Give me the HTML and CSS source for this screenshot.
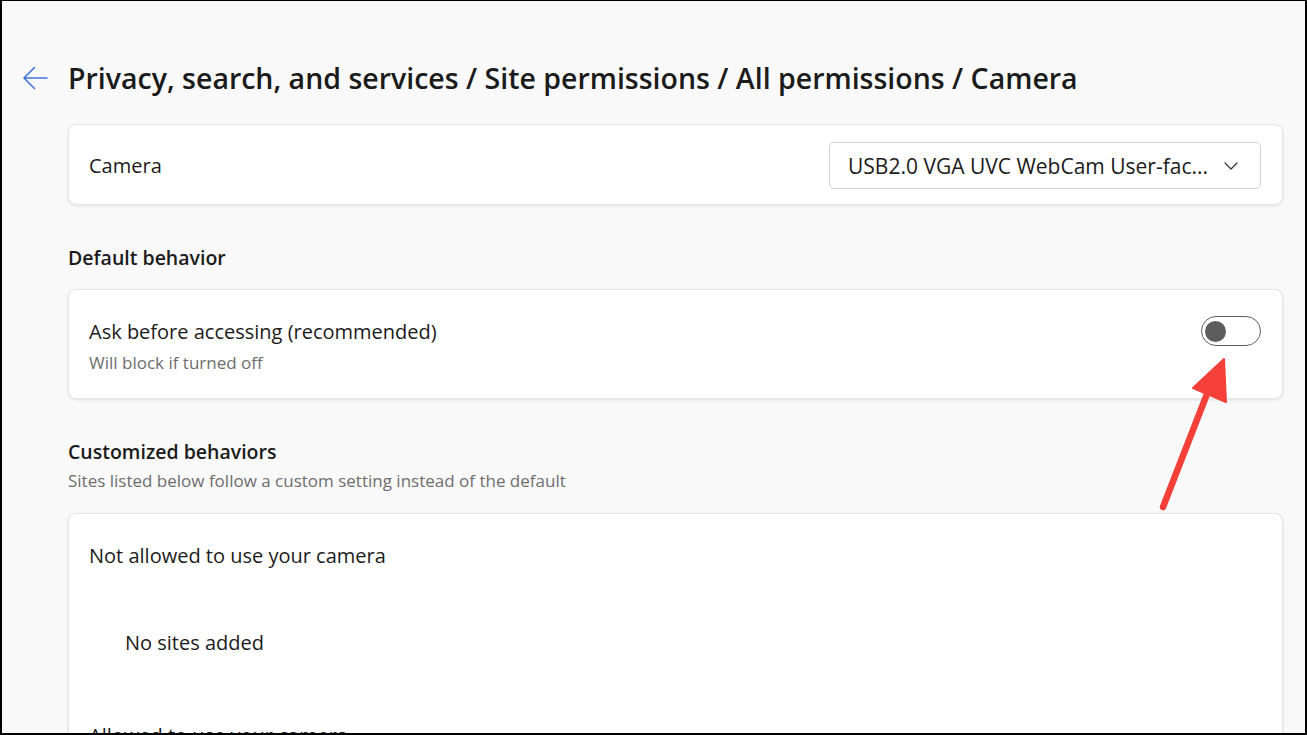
FILE: index.html
```html
<!DOCTYPE html>
<html lang="en">
<head>
<meta charset="utf-8">
<title>Camera</title>
<link rel="stylesheet" href="styles.css">
</head>
<body>
<div class="frame">
  <div class="page">
    <header class="header">
      <svg class="back" width="26" height="24" viewBox="0 0 26 24" aria-hidden="true">
        <path d="M25 12H2.5M12.5 1.5L2 12l10.5 10.5" fill="none" stroke="#3f74dc" stroke-width="1.6" stroke-linecap="round" stroke-linejoin="round"/>
      </svg>
      <h1 class="title">Privacy, search, and services / Site permissions / All permissions / Camera</h1>
    </header>

    <section class="card card-camera">
      <span class="label">Camera</span>
      <div class="select">
        <span class="select-text">USB2.0 VGA UVC WebCam User-fac...</span>
        <svg class="chev" width="14" height="8" viewBox="0 0 14 8" aria-hidden="true">
          <path d="M1 1l6 6 6-6" fill="none" stroke="#333" stroke-width="1.2" stroke-linecap="round" stroke-linejoin="round"/>
        </svg>
      </div>
    </section>

    <h2 class="section-title first">Default behavior</h2>
    <section class="card card-default">
      <div class="texts">
        <div class="label">Ask before accessing (recommended)</div>
        <div class="sub">Will block if turned off</div>
      </div>
      <div class="toggle"><span class="knob"></span></div>
    </section>

    <h2 class="section-title second">Customized behaviors</h2>
    <div class="section-sub">Sites listed below follow a custom setting instead of the default</div>
    <section class="card card-list">
      <div class="label">Not allowed to use your camera</div>
      <div class="empty">No sites added</div>
      <div class="label allowed">Allowed to use your camera</div>
    </section>
  </div>

  <svg class="annot" width="120" height="180" viewBox="0 0 120 180" aria-hidden="true">
    <line x1="13" y1="175" x2="57" y2="62" stroke="#f5403a" stroke-width="6.5" stroke-linecap="round"/>
    <polygon points="74,27 43,56 76,70" fill="#f5403a" stroke="#f5403a" stroke-width="2" stroke-linejoin="round"/>
  </svg>
</div>
</body>
</html>
```

FILE: styles.css
```css
* { box-sizing: border-box; }
html, body { margin: 0; padding: 0; }
body {
  width: 1307px;
  height: 735px;
  overflow: hidden;
  background: #000;
  font-family: "Open Sans", "Noto Sans", "Liberation Sans", sans-serif;
  color: #1b1b1b;
}
.frame {
  position: relative;
  width: 1307px;
  height: 735px;
  border-style: solid;
  border-color: #000;
  border-width: 1px 2px 2px 2px;
  background: #f9f9f9;
  overflow: hidden;
}
.page {
  padding: 0 22px 0 66px;
}
.header {
  display: flex;
  align-items: center;
  height: 40px;
  margin-top: 57px;
  margin-left: -46px;
}
.back { margin-right: 20px; flex: none; }
.title {
  margin: 0;
  font-size: 28.5px;
  font-weight: 600;
  line-height: 40px;
  color: #1b1b1b;
  white-space: nowrap;
}
.card {
  background: #fff;
  border: 1px solid #e6e6e6;
  border-radius: 8px;
  box-shadow: 0 1px 3px rgba(0,0,0,0.10);
}
.card-camera {
  margin-top: 26px;
  height: 81px;
  display: flex;
  align-items: center;
  justify-content: space-between;
  padding: 2px 21px 0 20px;
}
.label {
  font-size: 20px;
  line-height: 26px;
  color: #1b1b1b;
}
.select {
  width: 432px;
  height: 47px;
  border: 1px solid #d1d1d1;
  border-radius: 5px;
  display: flex;
  align-items: center;
  justify-content: space-between;
  padding: 0 22px 0 18px;
}
.select-text {
  font-size: 21px;
  font-weight: 500;
  color: #1b1b1b;
  white-space: nowrap;
}
.section-title {
  margin: 0;
  font-size: 19.5px;
  font-weight: 600;
  line-height: 28px;
  color: #1b1b1b;
}
.section-title.first { margin-top: 39px; }
.section-title.second { margin-top: 39px; }
.section-sub {
  margin-top: 4px;
  font-size: 17px;
  line-height: 22px;
  color: #6e6e6e;
}
.card-default {
  margin-top: 17px;
  height: 110px;
  display: flex;
  align-items: flex-start;
  justify-content: space-between;
  padding: 29px 21px 0 20px;
}
.sub {
  font-size: 17px;
  line-height: 22px;
  color: #6e6e6e;
  margin-top: 7px;
}
.toggle {
  width: 60px;
  height: 30px;
  margin-top: -3px;
  border: 1px solid #5f5f5f;
  border-radius: 15px;
  padding: 0 0 0 3px;
  display: flex;
  align-items: center;
}
.knob {
  width: 21px;
  height: 21px;
  border-radius: 50%;
  background: #5d5d5d;
}
.card-list {
  margin-top: 21px;
  height: 400px;
  padding: 29px 20px 0 20px;
}
.empty {
  margin-top: 61px;
  margin-left: 36px;
  font-size: 20px;
  line-height: 26px;
  color: #1b1b1b;
}
.allowed { margin-top: 67px; }
.annot {
  position: absolute;
  left: 1148px;
  top: 331px;
}
```
